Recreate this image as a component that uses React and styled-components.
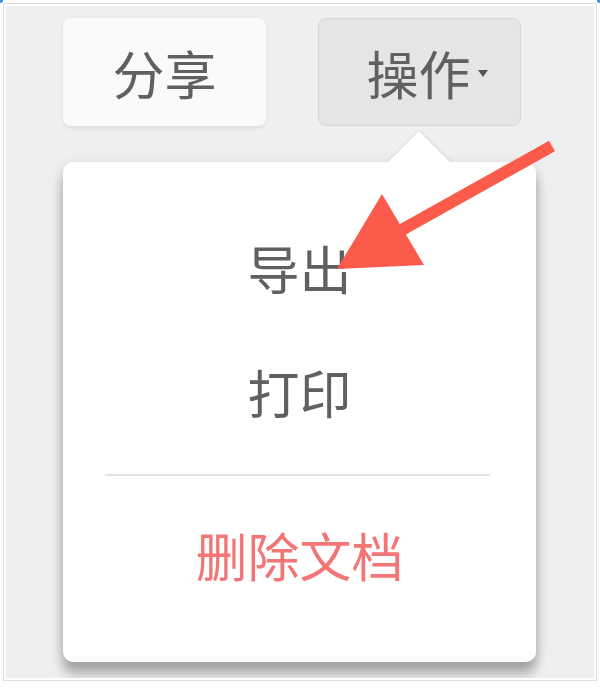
import React from "react";
import styled, { createGlobalStyle } from "styled-components";

const GlobalStyle = createGlobalStyle`
  html, body {
    margin: 0;
    padding: 0;
    background: #ffffff;
  }
  body {
    font-family: "Noto Sans CJK SC", "Noto Sans", sans-serif;
  }
`;

const Page = styled.div`
  position: relative;
  width: 600px;
  height: 688px;
  padding: 6px 6px 10px;
  box-sizing: border-box;
`;

const Handle = styled.span`
  position: absolute;
  top: -2px;
  ${(p) => (p.$right ? "right: -2px;" : "left: -2px;")}
  width: 5px;
  height: 5px;
  border-radius: 50%;
  background: #3d8fe8;
`;

const Canvas = styled.div`
  height: 100%;
  box-sizing: border-box;
  background: #efefef;
  outline: 1px solid #dedede;
  outline-offset: 2px;
  overflow: hidden;
  padding: 12px 0 0 57px;
`;

const Toolbar = styled.div`
  display: flex;
  gap: 52px;
`;

const Button = styled.button`
  display: flex;
  align-items: center;
  justify-content: center;
  gap: 7px;
  width: 203px;
  height: 108px;
  padding: 0 0 0 ${(p) => (p.$open ? "15px" : "0")};
  box-sizing: border-box;
  border-radius: 8px;
  border: 1px solid ${(p) => (p.$open ? "#d8d8d8" : "transparent")};
  background: ${(p) => (p.$open ? "#e5e5e5" : "#fafafa")};
  box-shadow: ${(p) => (p.$open ? "none" : "0 2px 4px rgba(0, 0, 0, 0.08)")};
  font-family: inherit;
  font-size: 52px;
  color: #606060;
  cursor: pointer;
`;

const Caret = styled.span`
  width: 0;
  height: 0;
  border-left: 5px solid transparent;
  border-right: 5px solid transparent;
  border-top: 7px solid #555555;
  margin-top: 2px;
`;

const Menu = styled.div`
  position: relative;
  margin-top: 36px;
  width: 473px;
  padding: 44px 0 45px;
  background: #ffffff;
  border-radius: 10px;
  box-shadow: 0 12px 12px rgba(0, 0, 0, 0.28), 0 2px 14px rgba(0, 0, 0, 0.1);
`;

const Pointer = styled.span`
  position: absolute;
  top: -32px;
  left: 323px;
  width: 66px;
  height: 32px;
  overflow: hidden;

  &::after {
    content: "";
    position: absolute;
    top: 10px;
    left: 11px;
    width: 44px;
    height: 44px;
    background: #ffffff;
    transform: rotate(45deg);
    box-shadow: 0 0 3px rgba(0, 0, 0, 0.16);
  }
`;

const Item = styled.div`
  height: 124px;
  line-height: 124px;
  text-align: center;
  font-size: 52px;
  color: ${(p) => (p.$danger ? "#f27676" : "#606060")};
`;

const Divider = styled.div`
  height: 2px;
  margin: 20px 46px 17px 42px;
  background: #e3e3e3;
`;

const Annotation = styled.svg`
  position: absolute;
  left: 0;
  top: 0;
  pointer-events: none;
`;

export default function App() {
  return (
    <>
      <GlobalStyle />
      <Page>
        <Handle />
        <Handle $right />
        <Canvas>
          <Toolbar>
            <Button>分享</Button>
            <Button $open>
              操作
              <Caret />
            </Button>
          </Toolbar>
          <Menu>
            <Pointer />
            <Item>导出</Item>
            <Item>打印</Item>
            <Divider />
            <Item $danger>删除文档</Item>
          </Menu>
        </Canvas>
        <Annotation width="600" height="688" viewBox="0 0 600 688">
          <line x1="552" y1="146" x2="398" y2="232" stroke="#fb5b4b" strokeWidth="12" />
          <polygon points="337,269 382,194 424,265" fill="#fb5b4b" />
        </Annotation>
      </Page>
    </>
  );
}
